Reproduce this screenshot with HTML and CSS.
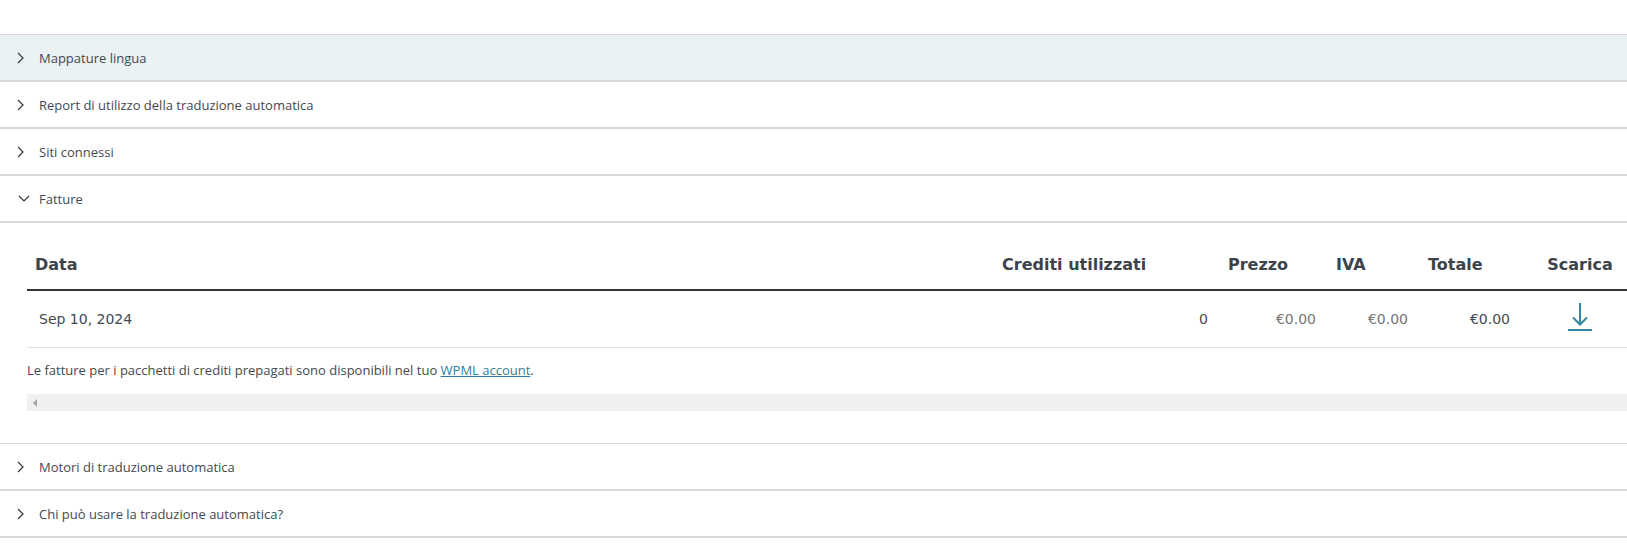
FILE: index.html
```
<!DOCTYPE html>
<html lang="it">
<head>
    <meta charset="UTF-8">
    <meta name="viewport" content="width=device-width, initial-scale=1.0">
    <title>Traduzione automatica</title>
    <link rel="stylesheet" href="styles.css">
</head>
<body>
    <div class="accordion">
        <button type="button" class="accordion-header active" aria-expanded="false">
            <svg class="chevron" viewBox="0 0 16 16" aria-hidden="true"><path d="M2 3 7 8 2 13"/></svg>
            <span>Mappature lingua</span>
        </button>
        <button type="button" class="accordion-header" aria-expanded="false">
            <svg class="chevron" viewBox="0 0 16 16" aria-hidden="true"><path d="M2 3 7 8 2 13"/></svg>
            <span>Report di utilizzo della traduzione automatica</span>
        </button>
        <button type="button" class="accordion-header" aria-expanded="false">
            <svg class="chevron" viewBox="0 0 16 16" aria-hidden="true"><path d="M2 3 7 8 2 13"/></svg>
            <span>Siti connessi</span>
        </button>
        <button type="button" class="accordion-header" aria-expanded="true" aria-controls="invoices">
            <svg class="chevron" viewBox="0 0 16 16" aria-hidden="true"><path d="M3 5 8 10 13 5"/></svg>
            <span>Fatture</span>
        </button>

        <div class="accordion-panel" id="invoices">
            <table class="invoices">
                <thead>
                    <tr>
                        <th>Data</th>
                        <th class="col-credits">Crediti utilizzati</th>
                        <th class="col-price">Prezzo</th>
                        <th class="col-vat">IVA</th>
                        <th class="col-total">Totale</th>
                        <th class="col-download">Scarica</th>
                    </tr>
                </thead>
                <tbody>
                    <tr>
                        <td>Sep 10, 2024</td>
                        <td class="number">0</td>
                        <td class="number muted">€0.00</td>
                        <td class="number muted">€0.00</td>
                        <td class="number">€0.00</td>
                        <td class="download">
                            <a href="#" aria-label="Scarica">
                                <svg viewBox="0 0 24 28" aria-hidden="true"><path d="M12 0V21M5 14.500 12 21.500 19 14.500M0 27H24"/></svg>
                            </a>
                        </td>
                    </tr>
                </tbody>
            </table>
            <p class="note">Le fatture per i pacchetti di crediti prepagati sono disponibili nel tuo <a href="#">WPML account</a>.</p>
            <div class="scroll-track">
                <svg viewBox="0 0 4 8" aria-hidden="true"><path d="M4 0V8L0 4Z"/></svg>
            </div>
        </div>

        <button type="button" class="accordion-header" aria-expanded="false">
            <svg class="chevron" viewBox="0 0 16 16" aria-hidden="true"><path d="M2 3 7 8 2 13"/></svg>
            <span>Motori di traduzione automatica</span>
        </button>
        <button type="button" class="accordion-header" aria-expanded="false">
            <svg class="chevron" viewBox="0 0 16 16" aria-hidden="true"><path d="M2 3 7 8 2 13"/></svg>
            <span>Chi può usare la traduzione automatica?</span>
        </button>
    </div>
</body>
</html>
```
FILE: styles.css
```
:root {
    --text: #444950;
    --heading: #3c434a;
    --muted: #757575;
    --link: #33879e;
    --border: #d8d8d8;
    --active: #eaf2f4;
}

* {
    box-sizing: border-box;
}

body {
    margin: 0;
    padding-top: 34px;
    background: #fff;
    color: var(--text);
    font-family: 'Open Sans', Arial, sans-serif;
    font-size: 13px;
    line-height: 20px;
}

.accordion {
    border-bottom: 1px solid var(--border);
}

.accordion-header {
    display: flex;
    align-items: center;
    gap: 7px;
    width: 100%;
    height: 47px;
    padding: 0 16px;
    background: #fff;
    border: solid var(--border);
    border-width: 1px 0;
    color: inherit;
    font: inherit;
    text-align: left;
    cursor: pointer;
}

.accordion-header.active {
    background: var(--active);
}

.chevron {
    width: 16px;
    height: 16px;
    fill: none;
    stroke: #32373c;
    stroke-width: 1.2;
}

.accordion-panel {
    padding: 16px 0 32px 27px;
    border-top: 1px solid var(--border);
    overflow: hidden;
}

/* the table runs a little past the right edge of the panel */
.invoices {
    width: calc(100% + 11px);
    border-collapse: separate;
    border-spacing: 0;
    table-layout: fixed;
    font-family: Verdana, 'DejaVu Sans', sans-serif;
    font-size: 14px;
}

.invoices th {
    height: 52px;
    padding: 2px 8px 0;
    border-bottom: 2px solid #363636;
    color: var(--heading);
    font-size: 16px;
    text-align: left;
    white-space: nowrap;
}

.invoices td {
    height: 57px;
    padding: 0 12px;
    border-bottom: 1px solid #dfe6e8;
}

.col-credits {
    width: 226px;
}

.col-price {
    width: 108px;
}

.col-vat {
    width: 92px;
}

.col-total {
    width: 102px;
}

.col-download {
    width: 116px;
}

.invoices .col-download,
.invoices .download {
    text-align: center;
}

.invoices .download {
    padding-bottom: 4px;
}

.invoices .number {
    text-align: right;
}

.invoices .muted {
    color: var(--muted);
}

.download svg {
    display: block;
    width: 24px;
    height: 28px;
    margin: 0 auto;
    fill: none;
    stroke: var(--link);
    stroke-width: 2;
}

.note {
    margin: 12px 0 14px;
}

.note a {
    color: #2f7ea3;
    text-decoration: underline;
}

.scroll-track {
    display: flex;
    align-items: center;
    height: 17px;
    padding-left: 6px;
    background: #f0f0f0;
}

.scroll-track svg {
    width: 4px;
    height: 8px;
    fill: #a3a3a3;
}
```
